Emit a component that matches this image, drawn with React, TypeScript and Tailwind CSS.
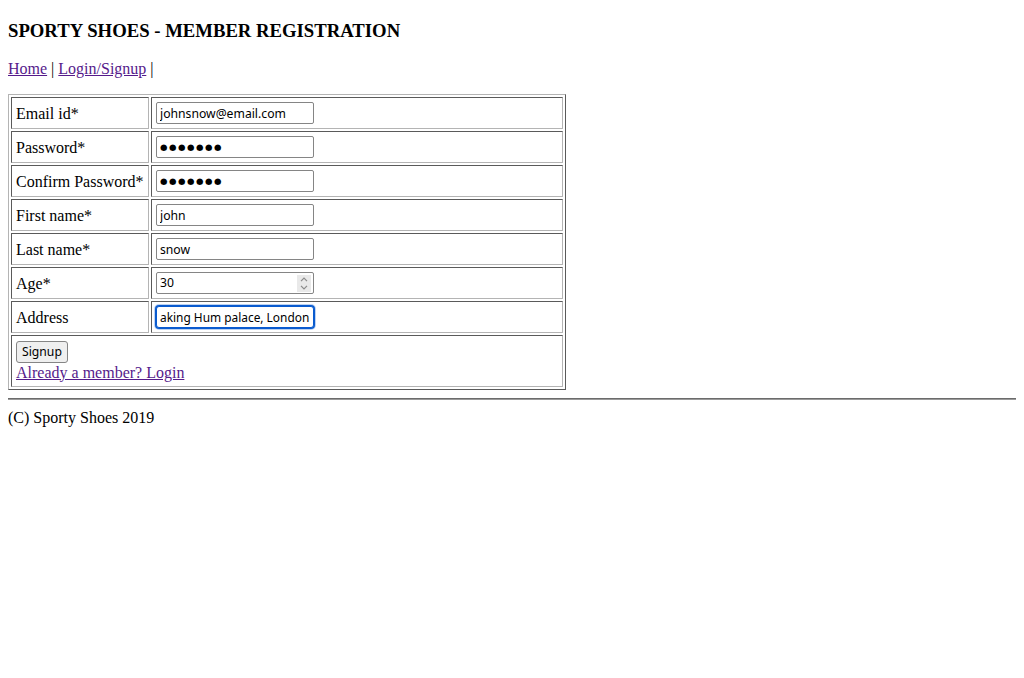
import React from 'react';

// Classic border="1" table look: cells inset, table outset
function Cell({ children, className = '' }: { children?: React.ReactNode; className?: string }) {
  return (
    <div
      className={`flex items-center border border-t-[#5a5a5a] border-l-[#5a5a5a] border-r-[#b4b4b4] border-b-[#b4b4b4] px-[4px] ${className}`}
    >
      {children}
    </div>
  );
}

function TextBox({ value, focused = false }: { value: string; focused?: boolean }) {
  return (
    <input
      readOnly
      value={value}
      className={
        focused
          ? "w-[158px] h-[22px] rounded-[3px] border border-[#0a5bcf] bg-white px-[3px] text-[11.9px] text-black font-['Noto_Sans',sans-serif] outline-none shadow-[0_0_0_1px_#0a5bcf,0_0_0_2px_#bdd3f3]"
          : "w-[158px] h-[22px] rounded-[2px] border border-[#858585] bg-white px-[3px] text-[12.2px] text-black font-['Noto_Sans',sans-serif] outline-none"
      }
    />
  );
}

function Dots() {
  return (
    <input
      readOnly
      value="●●●●●●●"
      className="w-[158px] h-[22px] rounded-[2px] border border-[#858585] bg-white px-[3px] text-[8.6px] tracking-[1.5px] text-black font-['DejaVu_Sans',sans-serif] outline-none"
    />
  );
}

function NumberBox({ value }: { value: string }) {
  return (
    <div className="flex h-[22px] w-[158px] items-center rounded-[2px] border border-[#858585] bg-white pl-[3px] pr-[2px]">
      <input
        readOnly
        value={value}
        className="min-w-0 flex-1 bg-transparent text-[12.2px] text-black font-['Noto_Sans',sans-serif] outline-none"
      />
      <div className="flex h-[17px] w-[14px] flex-col items-center justify-center gap-[3px] bg-[#e9e9e9]">
        <svg width="8" height="5" viewBox="0 0 8 5" fill="none" stroke="#8a8a8a" strokeWidth="1.2">
          <path d="M1 4.2 L4 1.2 L7 4.2" />
        </svg>
        <svg width="8" height="5" viewBox="0 0 8 5" fill="none" stroke="#8a8a8a" strokeWidth="1.2">
          <path d="M1 0.8 L4 3.8 L7 0.8" />
        </svg>
      </div>
    </div>
  );
}

function App() {
  const rows: { label: string; field: React.ReactNode }[] = [
    { label: 'Email id*', field: <TextBox value="johnsnow@email.com" /> },
    { label: 'Password*', field: <Dots /> },
    { label: 'Confirm Password*', field: <Dots /> },
    { label: 'First name*', field: <TextBox value="john" /> },
    { label: 'Last name*', field: <TextBox value="snow" /> },
    { label: 'Age*', field: <NumberBox value="30" /> },
    { label: 'Address', field: <TextBox value="aking Hum palace, London" focused /> },
  ];

  return (
    <div className="min-h-screen bg-white px-2 pt-[19.7px] text-black font-['Liberation_Serif','Times_New_Roman',serif] text-[16px] leading-[18.4px]">
      <h3 className="text-[18.72px] font-bold leading-[21.5px]">SPORTY SHOES - MEMBER REGISTRATION</h3>

      <p className="mt-[18.72px]">
        <a href="#" className="text-[#551a8b] underline">Home</a>
        <span className="text-black"> | </span>
        <a href="#" className="text-[#551a8b] underline">Login/Signup</a>
        <span className="text-black"> |</span>
      </p>

      {/* registration form table */}
      <div className="mt-[16px] w-[558px] border border-t-[#b4b4b4] border-l-[#b4b4b4] border-r-[#5a5a5a] border-b-[#5a5a5a] p-[2px]">
        <div className="grid grid-cols-[138px_412px] gap-[2px]">
          {rows.map((r) => (
            <React.Fragment key={r.label}>
              <Cell className="h-[32px] pt-[2px]">{r.label}</Cell>
              <Cell className="h-[32px]">{r.field}</Cell>
            </React.Fragment>
          ))}
          <Cell className="col-span-2 h-[52px] flex-col !items-start justify-center">
            <button className="h-[22px] rounded-[3px] border border-[#858585] bg-[#efefef] px-[5px] text-[12.2px] leading-none text-black font-['Noto_Sans',sans-serif]">
              Signup
            </button>
            <a href="#" className="mt-[1px] text-[#551a8b] underline">Already a member? Login</a>
          </Cell>
        </div>
      </div>

      <hr className="mt-[7.5px] border-0 border-t border-b border-t-[#6b6b6b] border-b-[#9a9a9a]" />

      <p className="mt-[9px]">(C) Sporty Shoes 2019</p>
    </div>
  );
}

export default App;
